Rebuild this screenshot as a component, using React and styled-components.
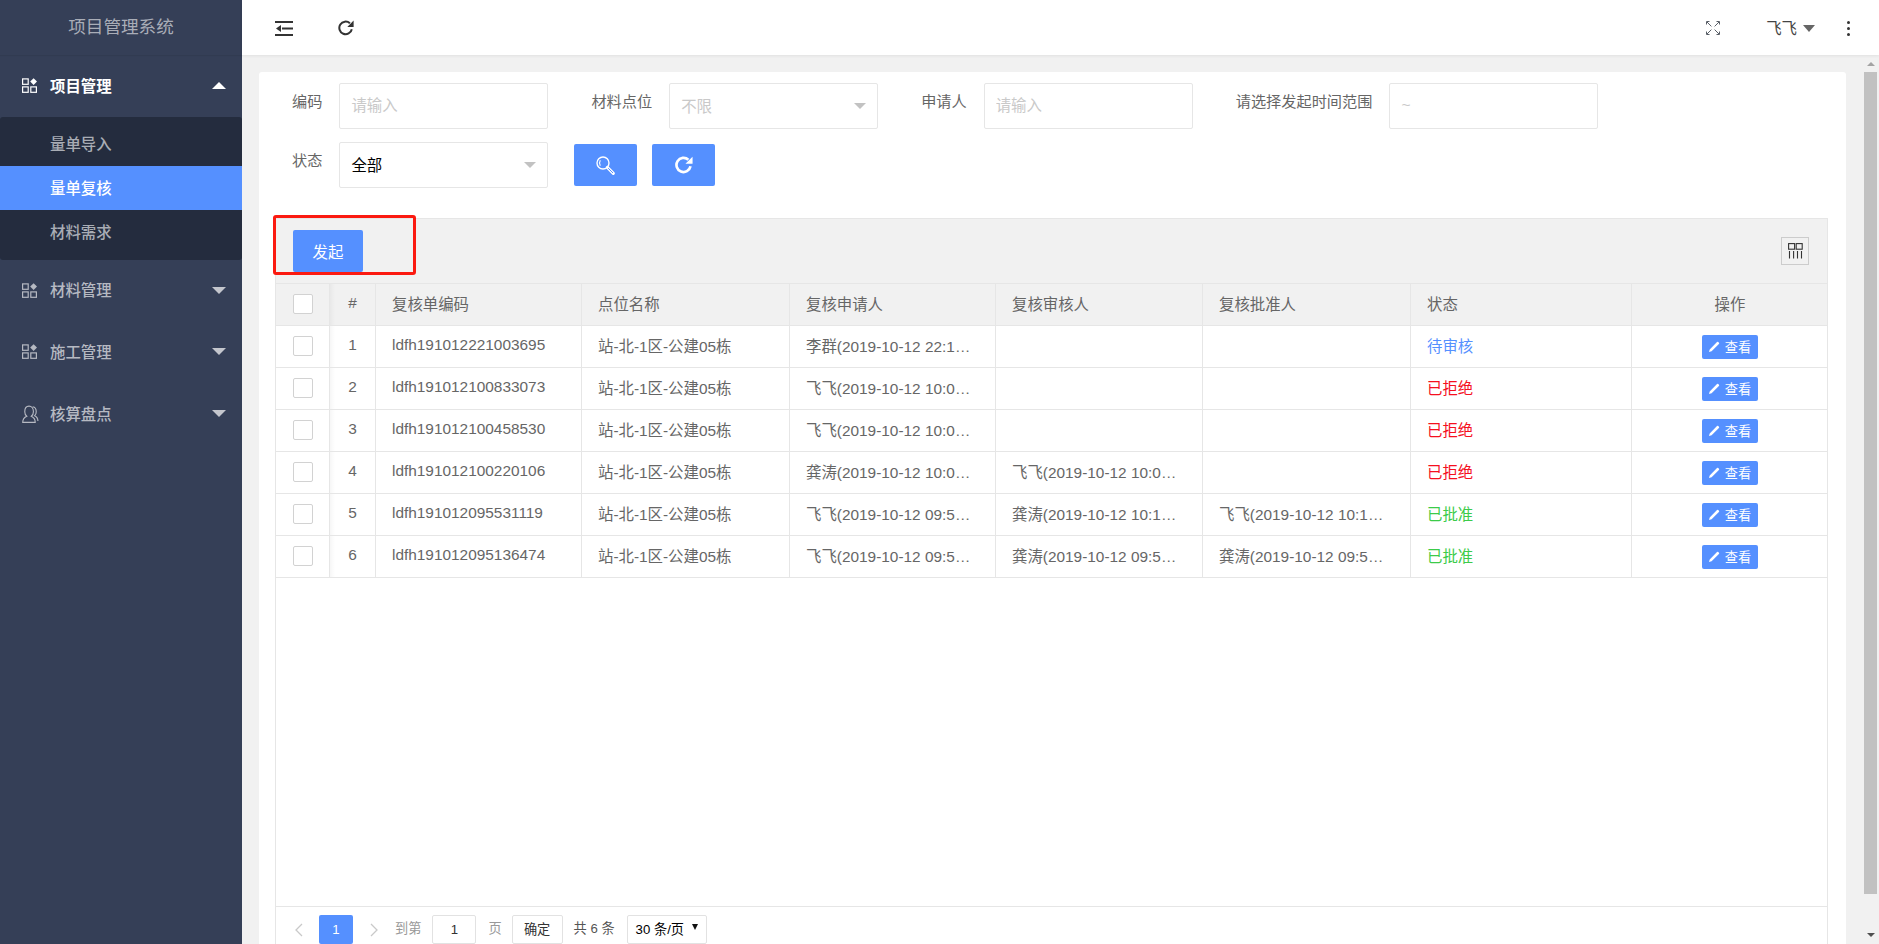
import React from "react";
import styled, { createGlobalStyle } from "styled-components";

const Global = createGlobalStyle`
  html, body { margin: 0; padding: 0; height: 100%; overflow: hidden; }
  body { font-family: "Liberation Sans", "Noto Sans CJK SC", sans-serif; font-size: 15.4px; color: #666; background: #f1f1f1; }
  * { box-sizing: border-box; }
`;

const BLUE = "#5590ff";

const Page = styled.div`display: flex; height: 100vh; overflow: hidden;`;

/* ---------- sidebar ---------- */
const Sidebar = styled.aside`width: 242px; flex: none; background: #353f57; color: #b6b9c2;`;
const Brand = styled.div`
  height: 55px; display: flex; align-items: center; justify-content: center;
  font-size: 17.6px; color: #a9adb7; padding-bottom: 5px;
  box-shadow: 0 1px 1px rgba(0,0,0,.06);
`;
const MenuHead = styled.div`
  height: 61.6px; display: flex; align-items: center; padding: 0 16px 0 22px;
  color: ${p => (p.$open ? "#fff" : "#b6b9c2")};
  font-weight: ${p => (p.$open ? 700 : 500)};
`;
const MenuIcon = styled.span`width: 15px; flex: none; display: flex; overflow: visible;`;
const MenuLabel = styled.span`margin-left: 13px; flex: 1; padding-bottom: 2px;`;
const MenuCaret = styled.span`
  width: 0; height: 0; border-left: 7px solid transparent; border-right: 7px solid transparent;
  ${p => (p.$up ? `border-bottom: 7px solid ${p.$color};` : `border-top: 7px solid ${p.$color};`)}
`;
const SubMenu = styled.div`background: #242c3e; border-radius: 3px; padding: 5px 0 6px;`;
const SubItem = styled.div`
  height: 44px; display: flex; align-items: center; padding: 0 0 2px 50px;
  background: ${p => (p.$active ? BLUE : "transparent")};
  color: ${p => (p.$active ? "#fff" : "#a9adb5")};
  font-weight: 500;
`;

/* ---------- top bar ---------- */
const Main = styled.div`flex: 1; min-width: 0; display: flex; flex-direction: column;`;
const TopBar = styled.header`
  height: 55px; flex: none; background: #fff; display: flex; align-items: center;
  padding: 1px 29px 0 33px; box-shadow: 0 1px 3px rgba(0,0,0,.07); position: relative; z-index: 1; color: #333;
`;
const TopLeftGap = styled.span`width: 45px;`;
const TopSpacer = styled.span`flex: 1;`;
const UserName = styled.span`margin-left: 46px; color: #444; font-size: 15.4px; padding-bottom: 2px;`;
const UserCaret = styled.span`
  margin-left: 6px; width: 0; height: 0;
  border-left: 6.5px solid transparent; border-right: 6.5px solid transparent; border-top: 7px solid #666;
`;
const Kebab = styled.span`
  margin-left: 32px; display: flex; flex-direction: column; gap: 3px;
  i { display: block; width: 3px; height: 3px; border-radius: 50%; background: #333; }
`;

/* ---------- content ---------- */
const Content = styled.div`flex: 1; min-height: 0; display: flex; overflow: hidden; padding-left: 17px;`;
const Card = styled.main`
  width: 1587px; flex: none; margin: 17px 18px 0 0; height: 900px;
  background: #fff; border-radius: 3px 3px 0 0; padding: 11px 18px 0 16px;
`;

const Scrollbar = styled.div`width: 15px; flex: none; display: flex; flex-direction: column;`;
const ScrollBtn = styled.div`
  height: ${p => p.$h}; flex: ${p => (p.$grow ? 1 : "none")}; width: 13px; display: flex; justify-content: center;
  align-items: ${p => (p.$grow ? "flex-end" : "center")}; padding-bottom: ${p => (p.$grow ? "7px" : "0")};
`;
const ScrollUp = styled.span`
  width: 0; height: 0; border-left: 4px solid transparent; border-right: 4px solid transparent; border-bottom: 4px solid #a3a3a3;
`;
const ScrollDown = styled.span`
  width: 0; height: 0; border-left: 4px solid transparent; border-right: 4px solid transparent; border-top: 4px solid #505050;
`;
const ScrollThumb = styled.div`width: 13px; height: 822px; flex: none; background: #c1c1c1;`;

/* ---------- filter ---------- */
const FilterRow = styled.div`display: flex; padding-left: 17px; margin-bottom: 13px; align-items: flex-start;`;
const Field = styled.div`display: flex; margin-right: 43px;`;
const FieldLabel = styled.label`margin-right: 17px; padding-top: 9px; line-height: 20px; color: #666; white-space: nowrap; font-size: 15.2px;`;
const TextInput = styled.input`
  width: 209px; height: 46px; border: 1px solid #e6e6e6; border-radius: 2px; padding: 0 11px;
  font: inherit; outline: none; background: #fff;
  &::placeholder { color: #c9c9c9; opacity: 1; }
`;
const SelectBox = styled.div`
  width: 209px; height: 46px; border: 1px solid #e6e6e6; border-radius: 2px; padding: 0 11px 2px 11px;
  display: flex; align-items: center; justify-content: space-between;
  color: ${p => (p.$muted ? "#c9c9c9" : "#000")};
`;
const SelectCaret = styled.span`
  width: 0; height: 0; margin-top: 2px; border-left: 6.5px solid transparent; border-right: 6.5px solid transparent; border-top: 6.5px solid #c2c2c2;
`;
const RangeText = styled.span`color: #c9c9c9; font-size: 15.4px;`;
const IconButton = styled.button`
  width: 63px; height: 42px; border: 0; border-radius: 2px; background: ${BLUE}; margin: 2px 0 0 ${p => p.$ml};
  display: flex; align-items: center; justify-content: center; padding: 0; color: #fff;
`;

/* ---------- table ---------- */
const Toolbar = styled.div`
  position: relative; margin-top: 30px; height: 66px; background: #f1f1f1;
  border: 1px solid #e6e6e6; display: flex; align-items: center; justify-content: space-between; padding: 0 18px 0 17px;
`;
const Marker = styled.div`
  position: absolute; left: -3px; top: -4px; width: 143px; height: 60px;
  border: 3px solid #fb1a10; border-radius: 3px; pointer-events: none;
`;
const PrimaryButton = styled.button`
  width: 70px; height: 42px; border: 0; border-radius: 2px; background: ${BLUE}; color: #fff; font: inherit; padding: 0;
`;
const ColsButton = styled.div`
  width: 28px; height: 28px; border: 1px solid #ccc; display: flex; align-items: center; justify-content: center; color: #333;
`;
const TableArea = styled.div`
  height: 622px; border: 1px solid #e6e6e6; border-top: 0; border-bottom: 0; overflow: hidden;
`;
const Table = styled.table`
  width: 100%; table-layout: fixed; border-collapse: separate; border-spacing: 0;
`;
const Th = styled.th`
  height: 42px; padding: 0 23.5px 3px 16px; font-weight: 400; color: #666; background: #f1f1f1;
  text-align: ${p => p.$align || "left"}; border-bottom: 1px solid #e6e6e6; border-right: 1px solid #e6e6e6;
  &:last-child { border-right: 0; padding-right: 16px; }
  ${p => p.$shade && "padding: 0 0 3px; background-image: linear-gradient(90deg, rgba(0,0,0,.035), transparent 5px);"}
`;
const Td = styled.td`
  height: 42px; padding: 0 23.5px 3px 16px; color: ${p => p.$color || "#666"};
  text-align: ${p => p.$align || "left"}; border-bottom: 1px solid #e6e6e6; border-right: 1px solid #e6e6e6;
  white-space: nowrap; overflow: hidden; text-overflow: ellipsis;
  &:last-child { border-right: 0; padding: 0 16px 2px; }
  ${p => p.$shade && "padding: 0 0 3px; background-image: linear-gradient(90deg, rgba(0,0,0,.035), transparent 5px);"}
`;
const CheckCell = styled(Td)`padding: 0 0 2px; text-align: center;`;
const CheckHead = styled(Th)`padding: 0 0 2px; text-align: center;`;
const CheckBox = styled.span`
  display: inline-block; width: 20px; height: 20px; vertical-align: middle;
  background: #fff; border: 1px solid #d2d2d2; border-radius: 2px;
`;
const ViewButton = styled.button`
  display: inline-flex; align-items: center; justify-content: center; gap: 5px; width: 56px; height: 24px; padding: 0;
  margin-top: 2px; border: 0; border-radius: 2px; background: ${BLUE}; color: #fff; font: inherit; font-size: 13.2px; vertical-align: middle;
`;

/* ---------- pager ---------- */
const Pager = styled.div`
  border: 1px solid #e6e6e6; border-bottom: 0; height: 50px; padding: 8px 0 0 18px;
  display: flex; align-items: flex-start; font-size: 13.2px; color: #666;
`;
const PagerArrow = styled.span`
  display: flex; height: 29px; align-items: center; margin-left: ${p => p.$ml || 0}; color: #c9c9c9;
`;
const PageCurrent = styled.span`
  margin-left: 16px; width: 34px; height: 29px; display: flex; align-items: center; justify-content: center;
  background: ${BLUE}; color: #fff; border-radius: 2px;
`;
const PagerText = styled.span`
  margin-left: ${p => p.$ml}; line-height: 27px; color: ${p => p.$color}; white-space: nowrap;
`;
const PageInput = styled.input`
  margin-left: 11px; width: 44px; height: 29px; border: 1px solid #e2e2e2; border-radius: 2px; text-align: center;
  font: inherit; color: #333; outline: none; padding: 0;
`;
const PageConfirm = styled.button`
  margin-left: 10px; width: 51px; height: 29px; border: 1px solid #e2e2e2; border-radius: 2px; background: #fff;
  font: inherit; color: #333; padding: 0 0 2px;
`;
const PageSize = styled.div`
  margin-left: 12px; width: 80px; height: 29px; border: 1px solid #e2e2e2; border-radius: 2px; background: #fff;
  color: #000; padding: 0 8px 2px 8px; display: flex; align-items: center; justify-content: space-between; white-space: nowrap;
`;
const PageSizeCaret = styled.span`
  width: 0; height: 0; margin-bottom: 3px; border-left: 3px solid transparent; border-right: 3px solid transparent; border-top: 6px solid #111;
`;

/* ---------- icons ---------- */
const AppsIcon = () => (
  <svg width="15" height="15" viewBox="0 0 15 15" fill="none" stroke="currentColor" strokeWidth="1.2">
    <rect x="0.6" y="0.9" width="5.6" height="5.4" />
    <rect x="0.6" y="8.9" width="5.6" height="5.4" />
    <rect x="8.8" y="8.9" width="5.6" height="5.4" />
    <path d="M11.6 0.2 15 3.6l-3.4 3.4L8.2 3.6z" fill="currentColor" stroke="none" />
  </svg>
);
const UsersIcon = () => (
  <svg style={{ flex: "none" }} width="17" height="18" viewBox="0 0 15 16" fill="none" stroke="currentColor" strokeWidth="1">
    <path d="M0.6 15.4c0-2.9 1.5-4.5 3.6-5.4-1.2-1-1.8-2.5-1.8-4.1C2.4 3 4 1 6.2 1s3.9 2 3.9 4.9c0 1.6-.7 3.1-1.9 4.1 2 .9 3.5 2.5 3.5 5.4z" />
    <path d="M9.4 1.5c2 .3 3.2 2.1 3.2 4.4 0 1.4-.5 2.7-1.4 3.6 1.7.8 2.9 2.3 2.9 4.8" />
  </svg>
);
const FoldIcon = () => (
  <svg width="18" height="15" viewBox="0 0 18 15" fill="currentColor">
    <rect x="0" y="0" width="18" height="2" />
    <rect x="7" y="6.5" width="11" height="2" />
    <rect x="0" y="13" width="18" height="2" />
    <path d="M1 7.5 6 4v7z" />
  </svg>
);
const ReloadIcon = ({ size = 16, sw = 2 }) => (
  <svg width={size} height={size} viewBox="0 0 16 16" fill="none" stroke="currentColor" strokeWidth={sw}>
    <path d="M13.8 9.2A6.3 6.3 0 1 1 11.9 3.3" />
    <path d="M15.6 0.6v6.3H9.3z" fill="currentColor" stroke="none" />
  </svg>
);
const SearchIcon = () => (
  <svg width="19" height="19" viewBox="0 0 19 19" fill="none" stroke="#fff">
    <circle cx="7" cy="7" r="6" strokeWidth="1.4" />
    <path d="M4.3 4.2C3.4 5.8 3.4 8.2 4.3 9.8" strokeWidth="1.1" />
    <path d="M11.4 11.4 17.3 17.4" strokeWidth="3" strokeLinecap="round" />
    <path d="M12.2 12.2 17 17" strokeWidth="1" stroke="#5590ff" />
  </svg>
);
const FullscreenIcon = () => (
  <svg width="14" height="14" viewBox="0 0 14 14" fill="none" stroke="#5a6068" strokeWidth="1">
    <path d="M1 1l4.4 4.4M13 1L8.6 5.4M1 13l4.4-4.4M13 13L8.6 8.6" />
    <path d="M0.5 3.5v-3h3M10.5 0.5h3v3M0.5 10.5v3h3M13.5 10.5v3h-3" />
  </svg>
);
const ColsIcon = () => (
  <svg width="15" height="16" viewBox="0 0 15 16" fill="none" stroke="#333" strokeWidth="1.1">
    <rect x="0.6" y="0.6" width="6" height="5.6" />
    <rect x="8.2" y="0.6" width="6" height="5.6" />
    <path d="M1.5 8v7.5M5.6 8v7.5M9.5 8v7.5M13.5 8v7.5" />
  </svg>
);
const PenIcon = () => (
  <svg width="11" height="11" viewBox="0 0 11 11" fill="#fff">
    <path d="M0 11l.7-2.6L8 1.1a.9.9 0 0 1 1.3 0l.6.6a.9.9 0 0 1 0 1.3L2.6 10.3z" />
  </svg>
);
const Chevron = ({ left }) => (
  <svg width="9" height="14" viewBox="0 0 9 14" fill="none" stroke="currentColor" strokeWidth="1.3">
    <path d={left ? "M8 1 2 7l6 6" : "M1 1l6 6-6 6"} />
  </svg>
);

/* ---------- data ---------- */
const menus = [
  { label: "材料管理", icon: <AppsIcon /> },
  { label: "施工管理", icon: <AppsIcon /> },
  { label: "核算盘点", icon: <UsersIcon /> },
];
const subs = [
  { label: "量单导入" },
  { label: "量单复核", active: true },
  { label: "材料需求" },
];
const heads = ["复核单编码", "点位名称", "复核申请人", "复核审核人", "复核批准人", "状态"];
const widths = [54, 46, 206, 208, 206, 207, 208, 221, 196];
const PENDING = { text: "待审核", color: "#5590ff" };
const REJECTED = { text: "已拒绝", color: "#f5101f" };
const APPROVED = { text: "已批准", color: "#3ccb4a" };
const rows = [
  ["ldfh191012221003695", "李群(2019-10-12 22:13:10)", "", "", PENDING],
  ["ldfh191012100833073", "飞飞(2019-10-12 10:08:33)", "", "", REJECTED],
  ["ldfh191012100458530", "飞飞(2019-10-12 10:04:58)", "", "", REJECTED],
  ["ldfh191012100220106", "龚涛(2019-10-12 10:02:20)", "飞飞(2019-10-12 10:03:11)", "", REJECTED],
  ["ldfh191012095531119", "飞飞(2019-10-12 09:55:31)", "龚涛(2019-10-12 10:13:02)", "飞飞(2019-10-12 10:15:20)", APPROVED],
  ["ldfh191012095136474", "飞飞(2019-10-12 09:51:36)", "龚涛(2019-10-12 09:53:12)", "龚涛(2019-10-12 09:54:40)", APPROVED],
];

export default function App() {
  return (
    <Page>
      <Global />
      <Sidebar>
        <Brand>项目管理系统</Brand>
        <MenuHead $open>
          <MenuIcon><AppsIcon /></MenuIcon>
          <MenuLabel>项目管理</MenuLabel>
          <MenuCaret $up $color="#fff" />
        </MenuHead>
        <SubMenu>
          {subs.map(s => (
            <SubItem key={s.label} $active={s.active}>{s.label}</SubItem>
          ))}
        </SubMenu>
        {menus.map(m => (
          <MenuHead key={m.label}>
            <MenuIcon>{m.icon}</MenuIcon>
            <MenuLabel>{m.label}</MenuLabel>
            <MenuCaret $color="#c4c6cd" />
          </MenuHead>
        ))}
      </Sidebar>
      <Main>
        <TopBar>
          <FoldIcon />
          <TopLeftGap />
          <ReloadIcon />
          <TopSpacer />
          <FullscreenIcon />
          <UserName>飞飞</UserName>
          <UserCaret />
          <Kebab><i /><i /><i /></Kebab>
        </TopBar>
        <Content>
          <Card>
            <FilterRow>
              <Field>
                <FieldLabel>编码</FieldLabel>
                <TextInput placeholder="请输入" />
              </Field>
              <Field>
                <FieldLabel>材料点位</FieldLabel>
                <SelectBox $muted>不限<SelectCaret /></SelectBox>
              </Field>
              <Field>
                <FieldLabel>申请人</FieldLabel>
                <TextInput placeholder="请输入" />
              </Field>
              <Field>
                <FieldLabel>请选择发起时间范围</FieldLabel>
                <SelectBox><RangeText>~</RangeText></SelectBox>
              </Field>
            </FilterRow>
            <FilterRow>
              <Field>
                <FieldLabel>状态</FieldLabel>
                <SelectBox>全部<SelectCaret /></SelectBox>
              </Field>
              <IconButton $ml="-17px"><SearchIcon /></IconButton>
              <IconButton $ml="15px"><ReloadIcon size={18} sw={2.4} /></IconButton>
            </FilterRow>
            <Toolbar>
              <PrimaryButton>发起</PrimaryButton>
              <ColsButton><ColsIcon /></ColsButton>
              <Marker />
            </Toolbar>
            <TableArea>
              <Table>
                <colgroup>
                  {widths.map((w, i) => <col key={i} style={{ width: w }} />)}
                </colgroup>
                <thead>
                  <tr>
                    <CheckHead><CheckBox /></CheckHead>
                    <Th $align="center" $shade>#</Th>
                    {heads.map(h => <Th key={h}>{h}</Th>)}
                    <Th $align="center">操作</Th>
                  </tr>
                </thead>
                <tbody>
                  {rows.map((r, i) => (
                    <tr key={r[0]}>
                      <CheckCell><CheckBox /></CheckCell>
                      <Td $align="center" $shade>{i + 1}</Td>
                      <Td>{r[0]}</Td>
                      <Td>站-北-1区-公建05栋</Td>
                      <Td>{r[1]}</Td>
                      <Td>{r[2]}</Td>
                      <Td>{r[3]}</Td>
                      <Td $color={r[4].color}>{r[4].text}</Td>
                      <Td $align="center"><ViewButton><PenIcon />查看</ViewButton></Td>
                    </tr>
                  ))}
                </tbody>
              </Table>
            </TableArea>
            <Pager>
              <PagerArrow><Chevron left /></PagerArrow>
              <PageCurrent>1</PageCurrent>
              <PagerArrow $ml="17px"><Chevron /></PagerArrow>
              <PagerText $ml="16px" $color="#999">到第</PagerText>
              <PageInput defaultValue="1" />
              <PagerText $ml="12px" $color="#999">页</PagerText>
              <PageConfirm>确定</PageConfirm>
              <PagerText $ml="11px" $color="#555">共 6 条</PagerText>
              <PageSize>30 条/页<PageSizeCaret /></PageSize>
            </Pager>
          </Card>
          <Scrollbar>
            <ScrollBtn $h="17px"><ScrollUp /></ScrollBtn>
            <ScrollThumb />
            <ScrollBtn $grow><ScrollDown /></ScrollBtn>
          </Scrollbar>
        </Content>
      </Main>
    </Page>
  );
}
